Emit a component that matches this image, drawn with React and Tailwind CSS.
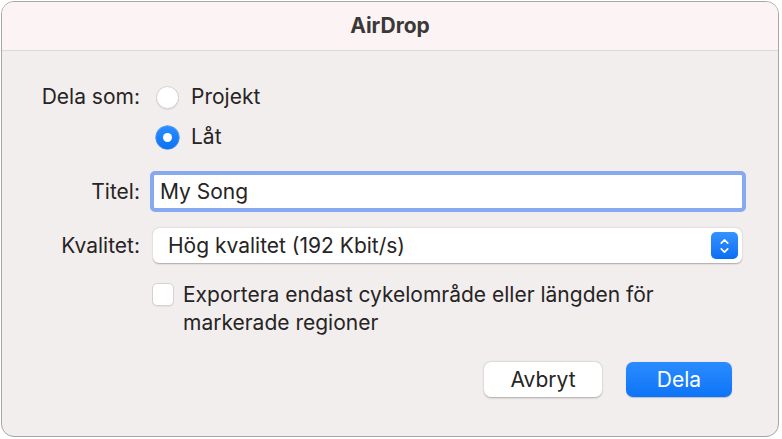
import { ChevronUp, ChevronDown } from "lucide-react";

const font = { fontFamily: "Inter, 'Liberation Sans', sans-serif" };

function Radio({ checked, label }) {
  return (
    <div className="flex items-center gap-[12px]">
      {checked ? (
        <span className="w-[23px] h-[23px] rounded-full bg-gradient-to-b from-[#2a8dff] to-[#0a72f5] flex items-center justify-center shadow-[0_0_0_0.5px_#0a6ae0]">
          <span className="w-[9px] h-[9px] rounded-full bg-white" />
        </span>
      ) : (
        <span className="w-[23px] h-[23px] rounded-full bg-white border border-[#d6d1d1] shadow-[0_1px_1px_rgba(0,0,0,0.08)]" />
      )}
      <span>{label}</span>
    </div>
  );
}

export default function App() {
  return (
    <div className="w-[782px] h-[439px] bg-white pt-[1px] pl-[1px]" style={font}>
      <div className="w-[778px] h-[436px] rounded-[13px] border border-[#a9a6a6] overflow-hidden bg-[#f3eeee] text-[21px] text-[#262424]">
        {/* Title bar */}
        <div className="h-[49px] bg-[#fcf4f4] border-b border-[#dcd6d6] flex items-center justify-center">
          <span className="font-bold text-[21px] text-[#3b3838]">AirDrop</span>
        </div>

        <div className="pt-[26px]">
          {/* Dela som */}
          <div className="flex items-center h-[40px]">
            <div className="w-[138px] text-right">Dela som:</div>
            <div className="ml-[16px]">
              <Radio label="Projekt" />
            </div>
          </div>
          <div className="flex items-center h-[40px]">
            <div className="w-[138px]" />
            <div className="ml-[16px]">
              <Radio checked label="Låt" />
            </div>
          </div>

          {/* Titel */}
          <div className="flex items-center mt-[14px] h-[41px]">
            <div className="w-[138px] text-right">Titel:</div>
            <div className="ml-[10px] w-[596px] h-[41px] rounded-[5px] border-[4px] border-[#87a9f1] bg-white flex items-center pl-[6px]">
              <span>My Song</span>
            </div>
          </div>

          {/* Kvalitet */}
          <div className="flex items-center mt-[16px] h-[35px]">
            <div className="w-[138px] text-right">Kvalitet:</div>
            <div className="ml-[13px] w-[589px] h-[35px] rounded-[6px] bg-white shadow-[0_0.5px_1.5px_rgba(0,0,0,0.3)] flex items-center justify-between pl-[15px] pr-[4px]">
              <span>Hög kvalitet (192 Kbit/s)</span>
              <span className="w-[27px] h-[27px] rounded-[5px] bg-gradient-to-b from-[#3592ff] to-[#0a6ef2] flex flex-col items-center justify-center text-white">
                <ChevronUp size={13} strokeWidth={3} className="-mb-[2px]" />
                <ChevronDown size={13} strokeWidth={3} className="-mt-[2px]" />
              </span>
            </div>
          </div>

          {/* Checkbox */}
          <div className="flex mt-[19px]">
            <div className="w-[138px]" />
            <div className="ml-[12px] flex items-start gap-[9px]">
              <span className="mt-[1px] w-[22px] h-[23px] rounded-[5px] bg-white border border-[#d6d1d1] shadow-[0_1px_1px_rgba(0,0,0,0.06)] shrink-0" />
              <div className="leading-[28px] w-[520px] -mt-[1px]">
                Exportera endast cykelområde eller längden för
                <br />
                markerade regioner
              </div>
            </div>
          </div>

          {/* Buttons */}
          <div className="flex justify-end gap-[24px] mt-[25px] pr-[46px]">
            <button className="w-[118px] h-[35px] rounded-[7px] bg-white shadow-[0_0.5px_2px_rgba(0,0,0,0.3)] text-[#262424]">
              Avbryt
            </button>
            <button className="w-[106px] h-[35px] rounded-[7px] bg-gradient-to-b from-[#2b8cff] to-[#0a74f7] text-white shadow-[0_0.5px_1px_rgba(0,0,0,0.2)]">
              Dela
            </button>
          </div>
        </div>
      </div>
    </div>
  );
}
